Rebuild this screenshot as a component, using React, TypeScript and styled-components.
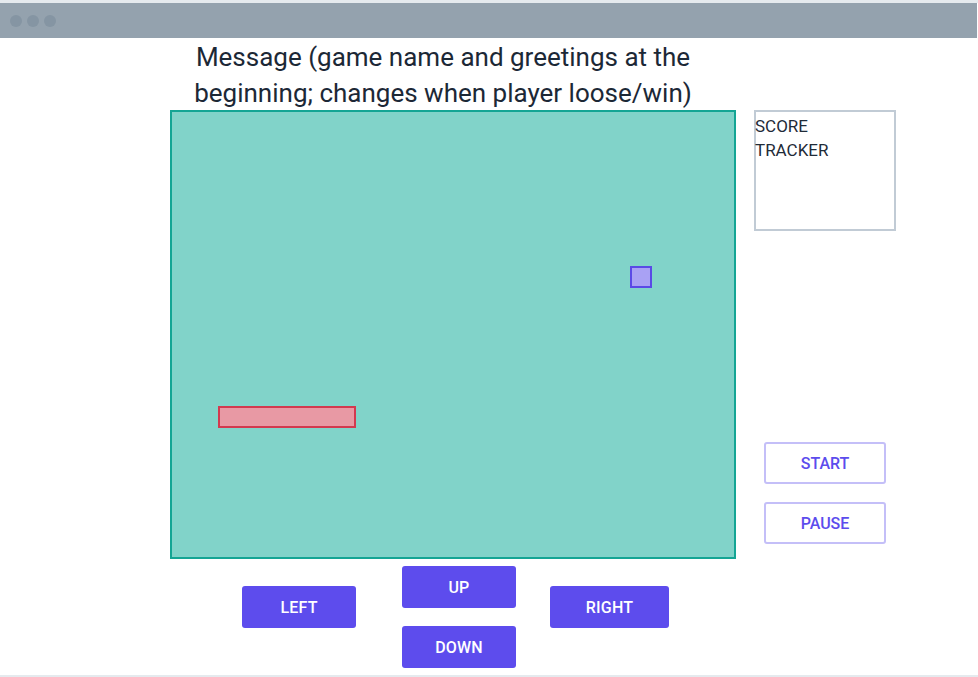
import React from "react";
import styled, { createGlobalStyle } from "styled-components";

const Global = createGlobalStyle`
  html, body { margin: 0; padding: 0; background: #e5eaee; }
  body { font-family: Roboto, "Noto Sans", "DejaVu Sans", sans-serif; color: #1f2b38; }
  * { box-sizing: border-box; }
`;

const Window = styled.div`
  margin-top: 3px;
  width: 978px;
  height: 672px;
  background: #ffffff;
  display: flex;
  flex-direction: column;
  overflow: hidden;
`;

const TitleBar = styled.div`
  height: 35px;
  background: #94a2ae;
  display: flex;
  align-items: center;
  gap: 5px;
  padding-left: 10px;
  margin-right: 1px;
`;

const Dot = styled.span`
  width: 12px;
  height: 12px;
  border-radius: 50%;
  background: #8595a3;
`;

const Stage = styled.div`
  display: flex;
  padding-left: 170px;
  gap: 18px;
`;

const MainColumn = styled.div`
  width: 566px;
  display: flex;
  flex-direction: column;
`;

const Message = styled.h1`
  margin: 0;
  height: 72px;
  padding: 1px 20px 0 0;
  text-align: center;
  font-size: 26px;
  line-height: 36px;
  font-weight: 400;
  white-space: nowrap;
  color: #1c2836;
`;

const Board = styled.div`
  position: relative;
  height: 449px;
  background: #81d3c9;
  border: 2px solid #14a594;
`;

const Paddle = styled.div`
  position: absolute;
  background: #e899a4;
  border: 2px solid #d3394f;
`;

const Ball = styled.div`
  position: absolute;
  background: #a9a1f4;
  border: 2px solid #5a4ae6;
`;

const Controls = styled.div`
  display: flex;
  align-items: flex-start;
  margin-top: 7px;
  padding-left: 72px;
`;

const DPadColumn = styled.div`
  display: flex;
  flex-direction: column;
  gap: 18px;
  margin: 0 34px 0 46px;
`;

const SolidButton = styled.button<{ $w: number; $offset?: number }>`
  width: ${(p) => p.$w}px;
  height: 42px;
  margin-top: ${(p) => p.$offset ?? 0}px;
  border: none;
  border-radius: 3px;
  background: #5d4ced;
  color: #ffffff;
  font-family: inherit;
  font-size: 16px;
  font-weight: 500;
  letter-spacing: 0.2px;
  padding: 0;
`;

const SideColumn = styled.div`
  display: flex;
  flex-direction: column;
  align-items: flex-start;
  padding-top: 72px;
`;

const ScoreBox = styled.div`
  width: 142px;
  height: 121px;
  border: 2px solid #c1cbd5;
  padding-top: 2px;
  color: #1f2b38;
`;

const ScoreLabel = styled.div`
  margin-left: -1px;
  font-size: 17px;
  line-height: 24px;
`;

const ButtonStack = styled.div`
  display: flex;
  flex-direction: column;
  gap: 18px;
  margin: 211px 0 0 10px;
`;

const OutlineButton = styled.button`
  width: 122px;
  height: 42px;
  border: 2px solid #c4bff8;
  border-radius: 3px;
  background: #ffffff;
  color: #5c4ced;
  font-family: inherit;
  font-size: 16px;
  font-weight: 500;
  padding: 0;
`;

export default function App() {
  const paddle = { left: 46, top: 294, width: 138, height: 22 };
  const ball = { left: 458, top: 154, size: 22 };
  return (
    <>
      <Global />
      <Window>
        <TitleBar>
          <Dot />
          <Dot />
          <Dot />
        </TitleBar>
        <Stage>
          <MainColumn>
            <Message>
              Message (game name and greetings at the
              <br />
              beginning; changes when player loose/win)
            </Message>
            <Board>
              <Paddle
                style={{
                  left: paddle.left,
                  top: paddle.top,
                  width: paddle.width,
                  height: paddle.height,
                }}
              />
              <Ball
                style={{
                  left: ball.left,
                  top: ball.top,
                  width: ball.size,
                  height: ball.size,
                }}
              />
            </Board>
            <Controls>
              <SolidButton $w={114} $offset={20}>LEFT</SolidButton>
              <DPadColumn>
                <SolidButton $w={114}>UP</SolidButton>
                <SolidButton $w={114}>DOWN</SolidButton>
              </DPadColumn>
              <SolidButton $w={119} $offset={20}>RIGHT</SolidButton>
            </Controls>
          </MainColumn>
          <SideColumn>
            <ScoreBox>
              <ScoreLabel>
                SCORE
                <br />
                TRACKER
              </ScoreLabel>
            </ScoreBox>
            <ButtonStack>
              <OutlineButton>START</OutlineButton>
              <OutlineButton>PAUSE</OutlineButton>
            </ButtonStack>
          </SideColumn>
        </Stage>
      </Window>
    </>
  );
}
